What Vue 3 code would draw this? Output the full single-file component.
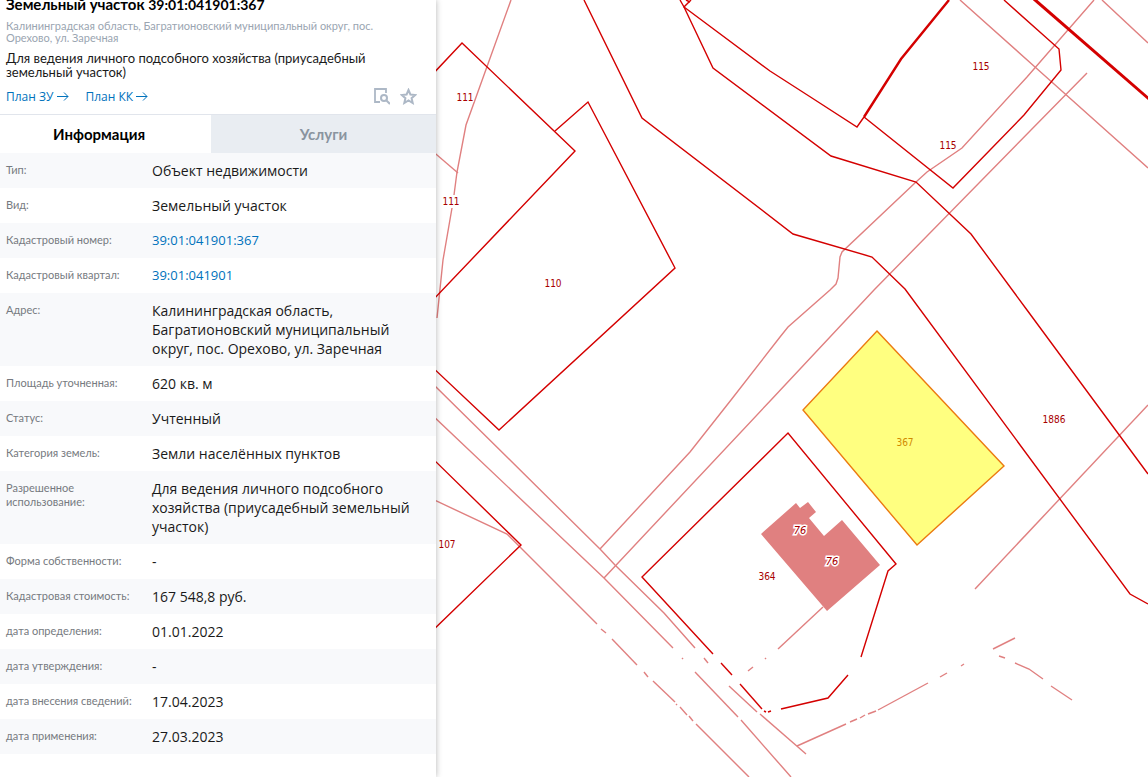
<script setup>
import { ref } from 'vue'

const tab = ref('info')

const rows = [
  { label: 'Тип:', value: 'Объект недвижимости' },
  { label: 'Вид:', value: 'Земельный участок' },
  { label: 'Кадастровый номер:', value: '39:01:041901:367', link: true },
  { label: 'Кадастровый квартал:', value: '39:01:041901', link: true },
  { label: 'Адрес:', value: 'Калининградская область, Багратионовский муниципальный округ, пос. Орехово, ул. Заречная' },
  { label: 'Площадь уточненная:', value: '620 кв. м' },
  { label: 'Статус:', value: 'Учтенный' },
  { label: 'Категория земель:', value: 'Земли населённых пунктов' },
  { label: 'Разрешенное использование:', value: 'Для ведения личного подсобного хозяйства (приусадебный земельный участок)' },
  { label: 'Форма собственности:', value: '-' },
  { label: 'Кадастровая стоимость:', value: '167 548,8 руб.' },
  { label: 'дата определения:', value: '01.01.2022' },
  { label: 'дата утверждения:', value: '-' },
  { label: 'дата внесения сведений:', value: '17.04.2023' },
  { label: 'дата применения:', value: '27.03.2023' },
]

// Utility lines and roads
const faintLines = [
  '511,0 466,125 457,172 454,195',
  '452,208 443,260 437,318',
  '430,149 458,173',
  '430,381 600,549 615,565 664,613 695,648',
  '704,658 708,663',
  '729,686 757,712',
  '760,714 806,754',
  '430,413 604,578 673,648',
  '682,658 683,659',
  '695,672 738,717',
  '741,720 791,777',
  '430,498 507,534 597,624',
  '601,629 606,633',
  '612,639 637,665',
  '644,672 648,677',
  '653,681 675,702',
  '676,704 677,705',
  '680,707 687,715',
  '689,716 693,721',
  '696,724 749,777',
  '600,549 690,452 731,400 780,337 788,327 830,290 836,284 838,278 840,257 842,252 916,182 927,172 962,148 1027,77 1094,0',
  '604,578 771,400 874,290 1087,73',
  '960,0 1035,67 1148,168',
  '1102,0 1148,43',
  '1148,405 975,589',
  '823,607 778,649',
  '766,658 765,659',
  '753,667 748,671',
  '797,746 846,724',
  '850,722 857,719',
  '860,718 865,715',
  '868,714 876,711',
  '878,710 928,683',
  '940,677 947,673',
  '961,666 964,664',
  '993,649 1015,638',
  '999,656 1005,658',
  '1015,663 1029,669 1043,679',
  '1051,686 1072,700',
]

// Parcel boundaries
const parcelLines = [
  '430,77 462,43 575,151 430,303',
  '555,131 588,102 675,268 499,430 430,365',
  '584,0 642,118 793,234 872,257 905,289 1130,594 1148,604',
  '680,0 684,7 713,68 831,156 916,182 971,234 1027,310 1148,474',
  '691,0 684,7 770,71 812,98 857,127 864,117',
  '686,0 690,2',
  '864,117 953,188 1024,115 1061,70 1059,49 1004,0',
  '430,456 521,545 430,633',
  '713,654 642,577 788,433 896,564 888,571 861,657',
  '848,675 828,698 781,709',
  '771,711 768,712',
  '766,712 764,711',
  '762,709 740,684',
  '732,675 721,663',
]

const labels = [
  { x: 465, y: 101, text: '111' },
  { x: 451, y: 205, text: '111' },
  { x: 553, y: 287, text: '110' },
  { x: 981, y: 70, text: '115' },
  { x: 948, y: 149, text: '115' },
  { x: 1054, y: 423, text: '1886' },
  { x: 447, y: 548, text: '107' },
  { x: 767, y: 580, text: '364' },
]
</script>

<template>
  <main class="page">
    <section class="panel">
      <header class="head">
        <h1>Земельный участок <span>39:01:041901:367</span></h1>
        <p class="address">Калининградская область, Багратионовский муниципальный округ, пос. Орехово, ул. Заречная</p>
        <p class="usage">Для ведения личного подсобного хозяйства (приусадебный земельный участок)</p>
        <div class="actions">
          <a v-for="name in ['План ЗУ', 'План КК']" :key="name" href="#">{{ name }}
            <svg width="12" height="9" viewBox="0 0 12 9" aria-hidden="true">
              <path d="M0 4.5H11M7 .5L11 4.5L7 8.5" fill="none" stroke="currentColor" />
            </svg>
          </a>
          <button type="button" class="find" aria-label="Найти на карте">
            <svg width="17" height="17" viewBox="0 0 17 17" fill="none" stroke="#adb8c6">
              <path d="M7 14H2V1H13V5" stroke-width="1.8" />
              <circle cx="11" cy="10" r="3" stroke-width="2" />
              <path d="M13.2 12.2L17 16" stroke-width="2" />
            </svg>
          </button>
          <button type="button" aria-label="В избранное">
            <svg width="17" height="17" viewBox="0 0 17 17">
              <path d="M8.5 2L10.4 6.5L15.3 7L11.6 10.2L12.7 15L8.5 12.5L4.3 15L5.4 10.2L1.7 7L6.6 6.5Z" fill="none" stroke="#adb8c6" stroke-width="2" />
            </svg>
          </button>
        </div>
      </header>
      <nav class="tabs">
        <button type="button" :class="{ active: tab === 'info' }" @click="tab = 'info'">Информация</button>
        <button type="button" :class="{ active: tab === 'services' }" @click="tab = 'services'">Услуги</button>
      </nav>
      <table>
        <tbody>
          <tr v-for="row in rows" :key="row.label">
            <th scope="row">{{ row.label }}</th>
            <td><a v-if="row.link" href="#">{{ row.value }}</a><template v-else>{{ row.value }}</template></td>
          </tr>
        </tbody>
      </table>
    </section>

    <section class="map" aria-label="Карта">
      <svg viewBox="436 0 712 777" preserveAspectRatio="xMinYMin slice">
        <polyline v-for="p in faintLines" :key="p" class="faint" :points="p" />
        <polyline v-for="p in parcelLines" :key="p" class="parcel" :points="p" />
        <polyline class="parcel double" points="864,117 901,59 949,0" />
        <polyline class="parcel district" points="1034,-1 1149,99" />
        <polygon class="building" points="796,503 800,508 808,502 816,512 809,518 824,536 842,520 880,565 827,611 761,534" />
        <polygon class="selected" points="877,331 1004,466 917,545 803,410" />
        <text v-for="(l, i) in labels" :key="i" :x="l.x" :y="l.y">{{ l.text }}</text>
        <text class="gold" x="905" y="446">367</text>
        <text class="house" x="800" y="534">76</text>
        <text class="house" x="832" y="565">76</text>
      </svg>
    </section>
  </main>
</template>

<style>
body {
  margin: 0;
}
</style>

<style scoped>
.page {
  display: flex;
  height: 100vh;
  overflow: hidden;
  background: #fff;
  color: #1a1a1a;
  font-family: Lato, "Open Sans", sans-serif;
}

.panel {
  position: relative;
  flex: 0 0 436px;
  overflow: hidden auto;
  scrollbar-width: none;
  background: #fff;
  box-shadow: 0 0 6px rgba(0, 0, 0, 0.3);
}

.head {
  padding: 0 60px 0 6px;
  border-bottom: 1px solid #e1e5ec;
}

h1 {
  margin: -5px 0 0;
  color: #000;
  font-size: 15px;
  line-height: 18px;
}

h1 span {
  font-size: 14px;
}

p {
  margin: 0;
}

.address {
  padding-top: 6px;
  color: #9aa5b1;
  font-size: 11px;
  line-height: 12px;
}

.usage {
  padding-top: 7px;
  font-size: 13px;
  line-height: 14px;
}

.actions {
  display: flex;
  align-items: center;
  gap: 17px;
  height: 35px;
  margin-right: -41px;
  font-family: "Open Sans", "Noto Sans", sans-serif;
  font-size: 12px;
}

a {
  color: #0072bc;
  text-decoration: none;
}

button {
  border: 0;
  padding: 0;
  background: none;
  font: inherit;
  cursor: pointer;
}

.actions button {
  display: flex;
  margin-left: -7px;
}

.actions .find {
  margin-left: auto;
}

.tabs {
  display: flex;
}

.tabs button {
  flex: 1 1 225px;
  height: 38px;
  background: #e9edf2;
  color: #8a949f;
  font-size: 15px;
  font-weight: 700;
}

.tabs button:first-child {
  flex-basis: 211px;
  padding-right: 13px;
}

.tabs .active {
  background: #fff;
  color: #000;
}

table {
  width: 100%;
  border-collapse: collapse;
  table-layout: fixed;
}

tr:nth-child(odd) {
  background: #f8f9fb;
}

th,
td {
  vertical-align: top;
  text-align: left;
}

th {
  width: 136px;
  padding: 10px 4px 8px 6px;
  color: #767a80;
  font-size: 11px;
  font-weight: 400;
  line-height: 14px;
}

td {
  padding: 8px 24px 8px 6px;
  font-family: "Open Sans", "Noto Sans", sans-serif;
  font-size: 14px;
  line-height: 19px;
}

td a {
  display: block;
  font-size: 13px;
}

.map {
  flex: 1;
  min-width: 0;
}

.map svg {
  display: block;
  width: 100%;
  height: 100%;
}

polyline {
  fill: none;
}

.faint {
  stroke: #e08080;
  stroke-width: 1.4;
}

.parcel {
  stroke: #d40000;
  stroke-width: 1.4;
}

.double {
  stroke-width: 2.4;
}

.district {
  stroke-width: 3;
}

.building {
  fill: #e08080;
}

.selected {
  fill: #ffff80;
  stroke: #ec7a10;
  stroke-width: 1.4;
}

text {
  fill: #a80000;
  font-family: "DejaVu Sans Condensed", "DejaVu Sans", sans-serif;
  font-size: 10px;
  text-anchor: middle;
  paint-order: stroke;
  stroke: #fff;
  stroke-width: 2px;
}

.gold {
  fill: #d08a00;
  stroke: none;
}

.house {
  font-size: 11px;
  font-style: italic;
  stroke-width: 3px;
}
</style>
